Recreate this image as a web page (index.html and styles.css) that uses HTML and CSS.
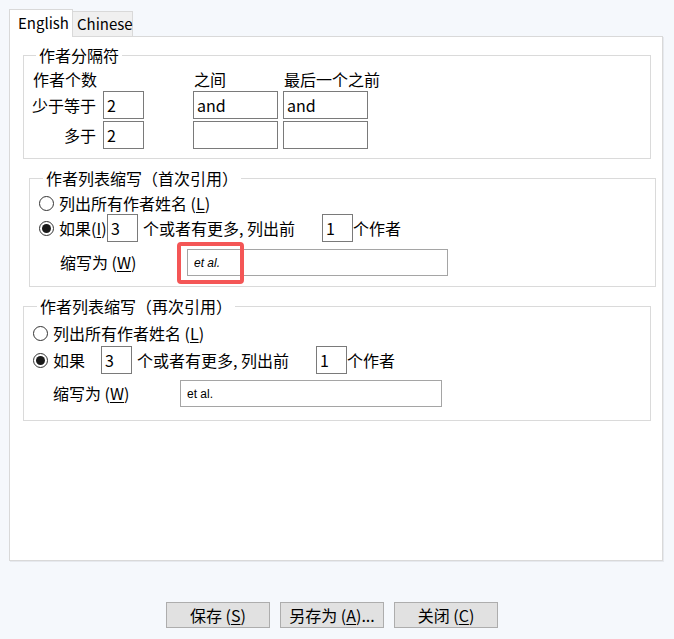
FILE: index.html
```html
<!DOCTYPE html>
<html lang="zh-CN">
<head>
    <meta charset="UTF-8">
    <title>作者列表设置</title>
    <link rel="stylesheet" href="styles.css">
</head>
<body>
    <div class="tabs">
        <div class="tab active">English</div>
        <div class="tab">Chinese</div>
    </div>

    <div class="panel">
        <fieldset class="group group-sep">
            <legend>作者分隔符</legend>
            <div class="sep-grid">
                <div class="sep-head">作者个数</div>
                <div></div>
                <div class="sep-head">之间</div>
                <div class="sep-head">最后一个之前</div>

                <div class="sep-label">少于等于</div>
                <input class="field field-num" value="2">
                <input class="field field-wide" value="and">
                <input class="field field-wide" value="and">

                <div class="sep-label right">多于</div>
                <input class="field field-num" value="2">
                <input class="field field-wide" value="">
                <input class="field field-wide" value="">
            </div>
        </fieldset>

        <fieldset class="group group-list group-first">
            <legend>作者列表缩写（首次引用）</legend>
            <div class="row row-radio">
                <span class="radio"></span>
                <span>列出所有作者姓名 (<u>L</u>)</span>
            </div>
            <div class="row row-if">
                <span class="radio checked"></span>
                <span class="if-label">如果(<u>I</u>)</span>
                <input class="field field-count" value="3">
                <span class="more-label">个或者有更多, 列出前</span>
                <input class="field field-count" value="1">
                <span>个作者</span>
            </div>
            <div class="row row-abbr">
                <span class="abbr-label">缩写为 (<u>W</u>)</span>
                <div class="abbr-wrap">
                    <input class="field field-abbr italic" value="et al.">
                    <span class="highlight"></span>
                </div>
            </div>
        </fieldset>

        <fieldset class="group group-list group-second">
            <legend>作者列表缩写（再次引用）</legend>
            <div class="row row-radio">
                <span class="radio"></span>
                <span>列出所有作者姓名 (<u>L</u>)</span>
            </div>
            <div class="row row-if">
                <span class="radio checked"></span>
                <span class="if-label">如果</span>
                <input class="field field-count" value="3">
                <span class="more-label">个或者有更多, 列出前</span>
                <input class="field field-count" value="1">
                <span>个作者</span>
            </div>
            <div class="row row-abbr">
                <span class="abbr-label">缩写为 (<u>W</u>)</span>
                <div class="abbr-wrap">
                    <input class="field field-abbr" value="et al.">
                </div>
            </div>
        </fieldset>
    </div>

    <div class="buttons">
        <button class="btn">保存 (<u>S</u>)</button>
        <button class="btn">另存为 (<u>A</u>)...</button>
        <button class="btn">关闭 (<u>C</u>)</button>
    </div>
</body>
</html>
```

FILE: styles.css
```css
body {
    margin: 0;
    background: #f5f8fc;
    font-family: 'Noto Sans CJK SC', 'Noto Sans', sans-serif;
    font-size: 16px;
    color: #000;
}

u {
    text-decoration-thickness: 1px;
    text-underline-offset: 2px;
}

/* tabs */
.tabs {
    display: flex;
    align-items: flex-end;
    padding: 9px 0 0 9px;
    height: 27px;
}

.tab {
    box-sizing: border-box;
    width: 60px;
    height: 25px;
    line-height: 23px;
    padding-left: 4px;
    font-size: 15px;
    background: #f0f0f0;
    border: 1px solid #d9d9d9;
    border-left: none;
    border-bottom: none;
}

.tab.active {
    width: 64px;
    height: 28px;
    line-height: 26px;
    padding-left: 8px;
    background: #fff;
    margin-bottom: -1px;
    position: relative;
    z-index: 1;
    border-left: 1px solid #d9d9d9;
}

/* panel */
.panel {
    box-sizing: border-box;
    margin-left: 9px;
    width: 654px;
    height: 525px;
    background: #fff;
    border: 1px solid #d9d9d9;
    box-shadow: 1px 1px 0 #e6e9ee;
    padding-top: 8px;
}

.group {
    box-sizing: border-box;
    margin: 0;
    border: 1px solid #dadada;
    padding: 0;
    min-width: 0;
}

.group legend {
    padding: 0 3px;
    margin-left: 4px;
    line-height: 20px;
}

/* author separator */
.group-sep {
    margin-left: 13px;
    width: 628px;
    height: 114px;
    padding: 5px 0 0 8px;
}

.sep-grid {
    display: grid;
    grid-template-columns: 71px 90px 90px 120px;
    grid-template-rows: 19px 28px 28px;
    row-gap: 2px;
    align-items: center;
}

.sep-head {
    line-height: 19px;
    padding-left: 1px;
}

.sep-label.right {
    text-align: right;
    padding-right: 7px;
}

.field {
    box-sizing: border-box;
    height: 28px;
    border: 1px solid #7a7a7a;
    padding: 0 3px;
    font: inherit;
    color: #000;
    background: #fff;
    outline: none;
}

.field-num {
    width: 41px;
}

.field-wide {
    width: 85px;
}

/* list abbreviation groups */
.group-list .row {
    display: flex;
    align-items: center;
}

.group-first {
    margin: 9px 0 0 19px;
    width: 627px;
    height: 119px;
    padding: 4px 0 0 9px;
}

.group-second {
    margin: 9px 0 0 13px;
    width: 628px;
    height: 125px;
    padding: 6px 0 0 9px;
}

.row-radio {
    height: 22px;
}

.row-if {
    height: 28px;
}

.group-second .row-if {
    margin-top: 2px;
}

.radio {
    box-sizing: border-box;
    width: 15px;
    height: 15px;
    border: 1px solid #333;
    border-radius: 50%;
    margin-right: 5px;
    display: flex;
    align-items: center;
    justify-content: center;
    flex-shrink: 0;
}

.radio.checked::after {
    content: '';
    width: 9px;
    height: 9px;
    border-radius: 50%;
    background: #1a1a1a;
}

.if-label {
    width: 48px;
    white-space: nowrap;
}

.field-count {
    width: 31px;
}

.more-label {
    width: 184px;
    padding-left: 5px;
    box-sizing: border-box;
    white-space: nowrap;
}

.row-abbr {
    margin-top: 7px;
    height: 26px;
}

.group-second .row-abbr {
    margin-top: 6px;
}

.abbr-label {
    width: 148px;
    padding-left: 21px;
    box-sizing: border-box;
}

.group-second .abbr-label {
    padding-left: 20px;
    width: 147px;
}

.abbr-wrap {
    position: relative;
}

.field-abbr {
    width: 261px;
    height: 27px;
    border-color: #a5a5a5;
    padding-left: 6px;
    font-family: 'Liberation Sans', 'Noto Sans', sans-serif;
    font-size: 12px;
}

.group-second .field-abbr {
    width: 262px;
}

.field-abbr.italic {
    font-style: italic;
}

.highlight {
    position: absolute;
    left: -10px;
    top: -6px;
    width: 67px;
    height: 42px;
    box-sizing: border-box;
    border: 4px solid #f45656;
    border-radius: 4px;
}

/* bottom buttons */
.buttons {
    display: flex;
    justify-content: center;
    gap: 10px;
    margin-top: 41px;
    padding-right: 10px;
}

.btn {
    width: 104px;
    height: 26px;
    background: #e1e1e1;
    border: 1px solid #adadad;
    font: inherit;
    color: #000;
    padding: 0;
}
```
